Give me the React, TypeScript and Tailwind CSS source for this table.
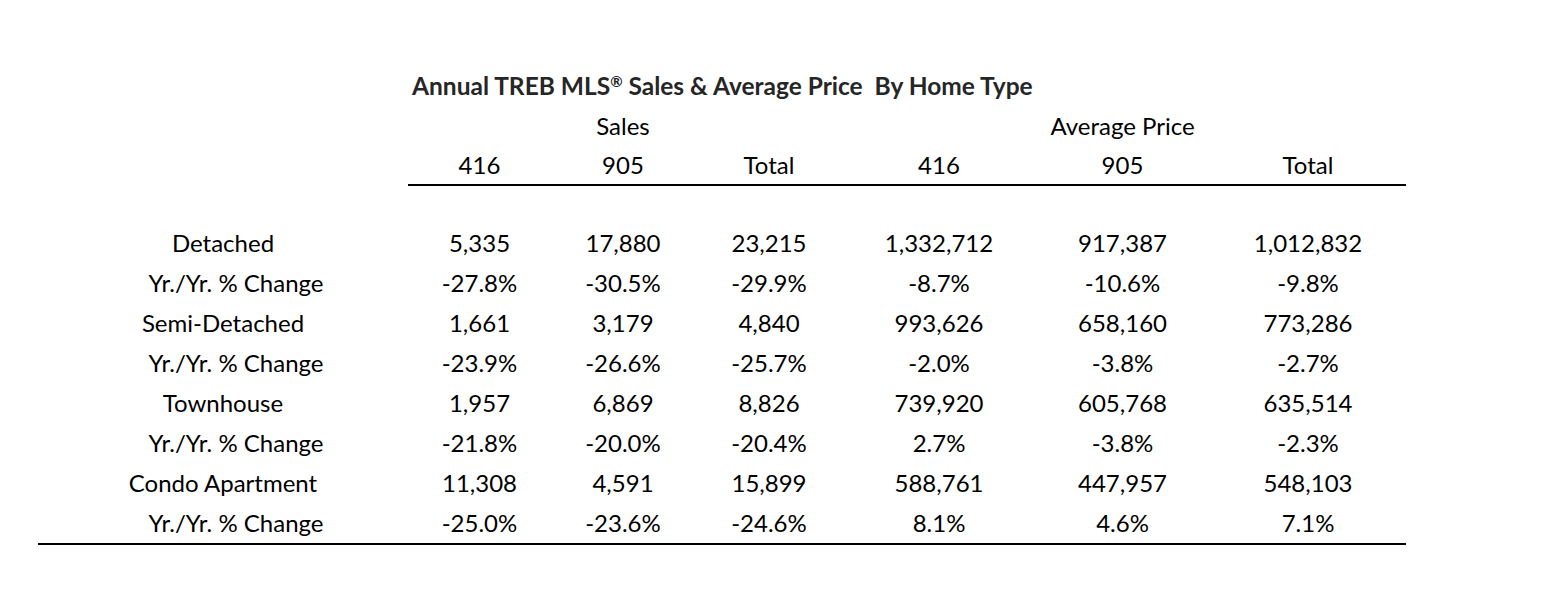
const rows = [
  { label: 'Detached', values: ['5,335', '17,880', '23,215', '1,332,712', '917,387', '1,012,832'] },
  { label: 'Yr./Yr. % Change', sub: true, values: ['-27.8%', '-30.5%', '-29.9%', '-8.7%', '-10.6%', '-9.8%'] },
  { label: 'Semi-Detached', values: ['1,661', '3,179', '4,840', '993,626', '658,160', '773,286'] },
  { label: 'Yr./Yr. % Change', sub: true, values: ['-23.9%', '-26.6%', '-25.7%', '-2.0%', '-3.8%', '-2.7%'] },
  { label: 'Townhouse', values: ['1,957', '6,869', '8,826', '739,920', '605,768', '635,514'] },
  { label: 'Yr./Yr. % Change', sub: true, values: ['-21.8%', '-20.0%', '-20.4%', '2.7%', '-3.8%', '-2.3%'] },
  { label: 'Condo Apartment', values: ['11,308', '4,591', '15,899', '588,761', '447,957', '548,103'] },
  { label: 'Yr./Yr. % Change', sub: true, values: ['-25.0%', '-23.6%', '-24.6%', '8.1%', '4.6%', '7.1%'] },
]

const cols = 'grid grid-cols-[370px_143px_144px_148px_192px_175px_196px]'

function App() {
  return (
    <div className="h-[612px] w-[1568px] bg-white pl-[38px] pt-[66px] font-['Lato',sans-serif] text-[24px] text-black">
      <div className="w-[1368px]">
        <div className={cols}>
          <div />
          <div className="col-span-6 flex h-10 items-center pl-1 text-[24.5px] font-bold text-[#262626]">
            <span>
              Annual TREB MLS<span className="relative -top-[8px] text-[15px]">®</span> Sales &amp; Average Price&nbsp; By
              Home Type
            </span>
          </div>
        </div>
        <div className={cols}>
          <div />
          <div />
          <div className="flex h-10 items-center justify-center">Sales</div>
          <div />
          <div />
          <div className="flex h-10 items-center justify-center">Average Price</div>
          <div />
        </div>
        <div className={cols}>
          <div />
          <div className="col-span-6 grid grid-cols-[143px_144px_148px_192px_175px_196px] border-b-2 border-black">
            {['416', '905', 'Total', '416', '905', 'Total'].map((h, i) => (
              <div key={i} className="flex h-[38px] items-center justify-center">
                {h}
              </div>
            ))}
          </div>
        </div>
        <div className="h-[37px]" />
        <div className="border-b-2 border-black">
          {rows.map((r, i) => (
            <div key={i} className={cols}>
              <div className={`flex h-10 items-center justify-center ${r.sub ? 'pl-[26px]' : ''}`}>
                {r.label}
              </div>
              {r.values.map((v, j) => (
                <div key={j} className="flex h-10 items-center justify-center">
                  {v}
                </div>
              ))}
            </div>
          ))}
        </div>
      </div>
    </div>
  )
}

export default App
